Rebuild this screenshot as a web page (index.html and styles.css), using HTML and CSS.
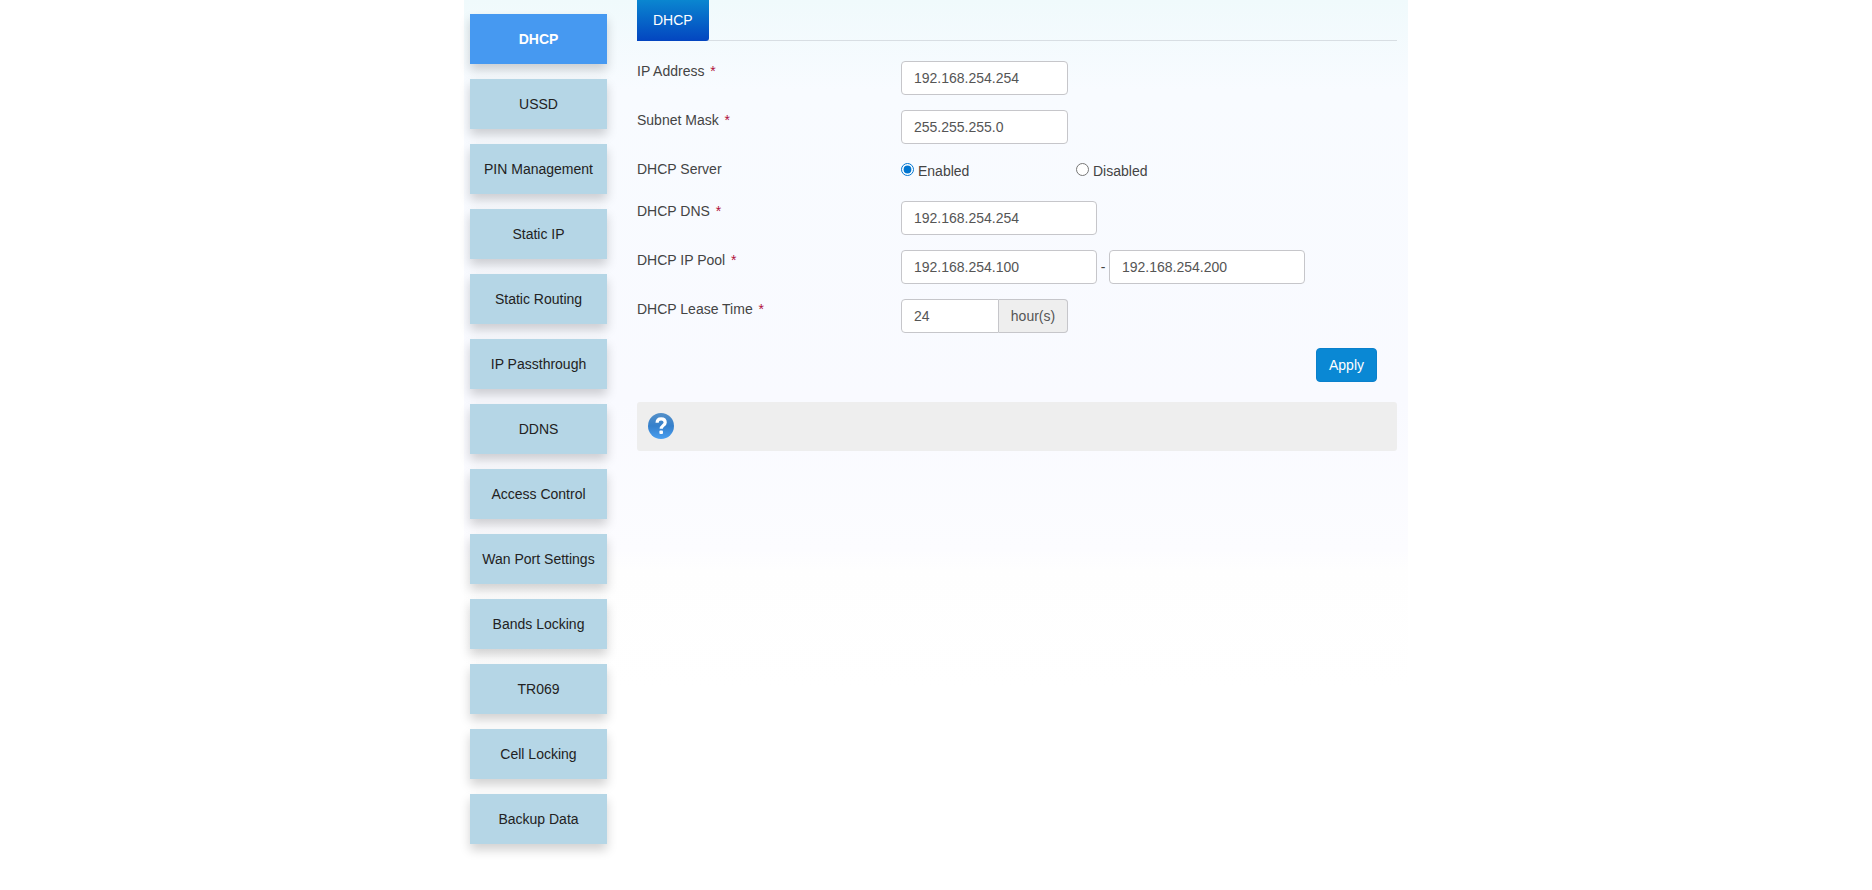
FILE: index.html
```html
<!DOCTYPE html>
<html lang="en">
<head>
<meta charset="utf-8">
<title>DHCP</title>
<link rel="stylesheet" href="styles.css">
</head>
<body>
<div class="container">
  <nav class="sidebar">
    <a class="nav-item active" href="#">DHCP</a>
    <a class="nav-item" href="#">USSD</a>
    <a class="nav-item" href="#">PIN Management</a>
    <a class="nav-item" href="#">Static IP</a>
    <a class="nav-item" href="#">Static Routing</a>
    <a class="nav-item" href="#">IP Passthrough</a>
    <a class="nav-item" href="#">DDNS</a>
    <a class="nav-item" href="#">Access Control</a>
    <a class="nav-item" href="#">Wan Port Settings</a>
    <a class="nav-item" href="#">Bands Locking</a>
    <a class="nav-item" href="#">TR069</a>
    <a class="nav-item" href="#">Cell Locking</a>
    <a class="nav-item" href="#">Backup Data</a>
  </nav>
  <main class="content">
    <div class="tabs"><a class="tab" href="#">DHCP</a></div>
    <form class="form">
      <div class="row">
        <label class="name" for="ip">IP Address <span class="required">*</span></label>
        <div class="field"><input class="control short" id="ip" type="text" value="192.168.254.254"></div>
      </div>
      <div class="row">
        <label class="name" for="mask">Subnet Mask <span class="required">*</span></label>
        <div class="field"><input class="control short" id="mask" type="text" value="255.255.255.0"></div>
      </div>
      <div class="row" role="radiogroup" aria-labelledby="server">
        <span class="name" id="server">DHCP Server</span>
        <div class="field choices">
          <label class="choice" for="on"><input class="radio" id="on" type="radio" name="server" checked>Enabled</label>
          <label class="choice" for="off"><input class="radio" id="off" type="radio" name="server">Disabled</label>
        </div>
      </div>
      <div class="row">
        <label class="name" for="dns">DHCP DNS <span class="required">*</span></label>
        <div class="field"><input class="control" id="dns" type="text" value="192.168.254.254"></div>
      </div>
      <div class="row">
        <label class="name" for="pool-start">DHCP IP Pool <span class="required">*</span></label>
        <div class="field">
          <input class="control" id="pool-start" type="text" value="192.168.254.100">
          <span class="dash">-</span>
          <input class="control" type="text" value="192.168.254.200" aria-label="DHCP IP Pool end">
        </div>
      </div>
      <div class="row">
        <label class="name" for="lease">DHCP Lease Time <span class="required">*</span></label>
        <div class="field">
          <input class="control lease" id="lease" type="text" value="24">
          <span class="addon">hour(s)</span>
        </div>
      </div>
      <div class="actions"><button class="apply" type="button">Apply</button></div>
    </form>
    <div class="help">
      <button class="help-button" type="button" aria-label="Help">
        <svg width="28" height="28" viewBox="0 0 28 28" aria-hidden="true">
          <defs>
            <linearGradient id="ball" x1="0" y1="0" x2="0" y2="1">
              <stop offset="0" stop-color="#5590c8"/>
              <stop offset="0.5" stop-color="#3580cc"/>
              <stop offset="1" stop-color="#4a9ff0"/>
            </linearGradient>
          </defs>
          <circle cx="14" cy="14" r="13" fill="url(#ball)"/>
          <path d="M10.1 10.8C10.1 8.2 11.6 6.8 14.1 6.8S18.2 8.3 18.2 10.4C18.2 13.3 14.2 13.5 14.2 16.8" fill="none" stroke="#fff" stroke-width="3.2"/>
          <rect x="12.4" y="18.6" width="3.6" height="3.4" rx="1" fill="#fff"/>
        </svg>
      </button>
    </div>
  </main>
</div>
</body>
</html>
```
FILE: styles.css
```css
* {
  box-sizing: border-box;
}

body {
  margin: 0;
  background: #fff;
  color: #444;
  font: 14px/20px "Liberation Sans", Arial, sans-serif;
}

.container {
  display: flex;
  gap: 30px;
  max-width: 944px;
  min-height: 100vh;
  margin: 0 auto;
  padding: 0 11px 0 6px;
  background: linear-gradient(#f0fafc 0, #f8fbff 90px, #f9faff 400px, #fcfcff 550px, #fefefe 570px, #fff 690px);
}

.sidebar {
  display: flex;
  flex: 0 0 137px;
  flex-direction: column;
  gap: 15px;
  padding: 14px 0;
}

.nav-item {
  padding: 15px 0;
  background: #b5d6e6;
  box-shadow: 0 6px 10px rgba(0, 0, 0, 0.18);
  color: #222;
  text-align: center;
  text-decoration: none;
}

.nav-item.active {
  background: #4699f1;
  color: #fff;
  font-weight: bold;
}

.content {
  flex: 1;
  min-width: 0;
}

.tabs {
  display: flex;
  height: 41px;
  border-bottom: 1px solid #d8dee3;
}

.tab {
  height: 41px;
  padding: 10px 16px;
  border-radius: 0 0 3px 0;
  background: linear-gradient(#0a86d0, #0345c0);
  color: #fff;
  text-decoration: none;
}

.form {
  display: flex;
  flex-direction: column;
  gap: 15px;
  padding-top: 20px;
}

.row {
  display: flex;
}

.name {
  flex: 0 0 264px;
}

.required {
  margin-left: 2px;
  color: #b0103a;
}

.field {
  display: flex;
}

.control {
  width: 196px;
  height: 34px;
  padding: 6px 12px;
  border: 1px solid #c6c6ca;
  border-radius: 4px;
  background: #fff;
  color: #555;
  font: inherit;
}

.control.short {
  width: 167px;
}

.control.lease {
  width: 98px;
  border-radius: 4px 0 0 4px;
}

.dash {
  width: 12px;
  padding: 7px 0;
  text-align: center;
}

.addon {
  width: 69px;
  padding: 6px 0;
  border: 1px solid #c6c6ca;
  border-left: 0;
  border-radius: 0 4px 4px 0;
  background: #eee;
  color: #555;
  text-align: center;
}

.choices {
  height: 27px;
  padding-top: 2px;
}

.choice {
  display: flex;
  gap: 4px;
  width: 175px;
}

.radio {
  width: 13px;
  height: 13px;
  margin: 2px 0 0;
  accent-color: #0075d0;
}

.actions {
  display: flex;
  justify-content: flex-end;
  padding-right: 20px;
}

.apply {
  width: 61px;
  height: 34px;
  padding: 0;
  border: 1px solid #0a80cc;
  border-radius: 4px;
  background: #0a88d4;
  color: #fff;
  font: inherit;
}

.help {
  margin-top: 20px;
  padding: 10px 10px 11px;
  border-radius: 3px;
  background: #eee;
}

.help-button {
  display: block;
  padding: 0;
  border: 0;
  background: none;
}

.help-button svg {
  display: block;
}
```
